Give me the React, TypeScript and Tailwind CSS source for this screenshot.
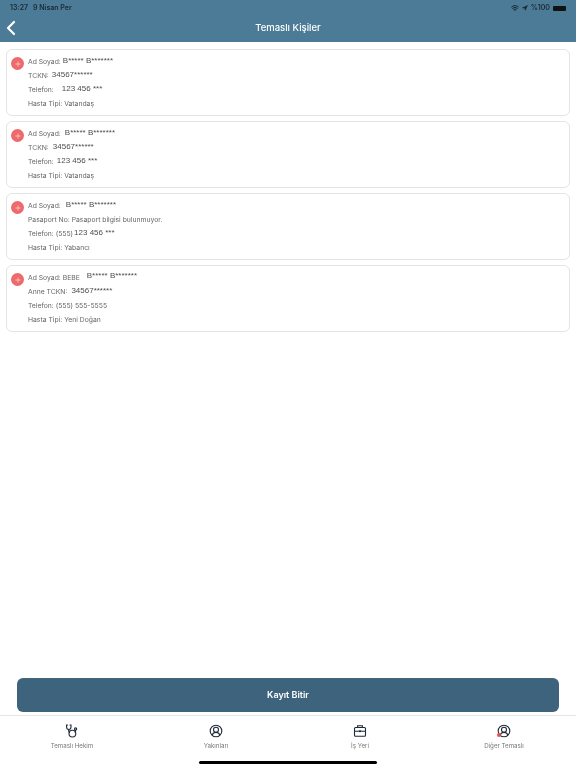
import React from 'react';
import { ChevronLeft, Navigation, Plus, Wifi } from 'lucide-react';

interface Row {
  label: string;
  value?: string;
  valueClass?: string;
}

const contacts: Row[][] = [
  [
    { label: 'Ad Soyad:', value: 'B***** B*******', valueClass: 'ml-[2px] -translate-y-px' },
    { label: 'TCKN:', value: '34567******', valueClass: 'ml-[3px] -translate-y-px' },
    { label: 'Telefon:', value: '123 456 ***', valueClass: 'ml-[8px] -translate-y-px' },
    { label: 'Hasta Tipi: Vatandaş' },
  ],
  [
    { label: 'Ad Soyad:', value: 'B***** B*******', valueClass: 'ml-[4px] -translate-y-px' },
    { label: 'TCKN:', value: '34567******', valueClass: 'ml-[4px] -translate-y-px' },
    { label: 'Telefon:', value: '123 456 ***', valueClass: 'ml-[3px] -translate-y-px' },
    { label: 'Hasta Tipi: Vatandaş' },
  ],
  [
    { label: 'Ad Soyad:', value: 'B***** B*******', valueClass: 'ml-[5px] -translate-y-px' },
    { label: 'Pasaport No: Pasaport bilgisi bulunmuyor.' },
    { label: 'Telefon: (555)', value: '123 456 ***', valueClass: 'ml-px -translate-y-px' },
    { label: 'Hasta Tipi: Yabancı' },
  ],
  [
    { label: 'Ad Soyad: BEBE', value: 'B***** B*******', valueClass: 'ml-[7px] -translate-y-[2px]' },
    { label: 'Anne TCKN:', value: '34567******', valueClass: 'ml-[4px] -translate-y-px' },
    { label: 'Telefon: (555) 555-5555' },
    { label: 'Hasta Tipi: Yeni Doğan' },
  ],
];

const PersonIcon = () => (
  <svg width="14" height="14" viewBox="0 0 14 14" fill="none" stroke="#1f2937" strokeWidth="1.1">
    <circle cx="7" cy="7" r="5.8" />
    <circle cx="7" cy="5.8" r="2.5" />
    <path d="M3.2 11c.6-1.8 2-2.6 3.8-2.6s3.2.8 3.8 2.6" />
  </svg>
);

const StethoscopeIcon = () => (
  <svg width="14" height="14" viewBox="0 0 14 14" fill="none" stroke="#1f2937" strokeWidth="1.1" strokeLinecap="round">
    <path d="M2.6 1H1.6v2c0 1.5 1 2.5 2.2 2.5S6 4.5 6 3V1H5" />
    <path d="M3.8 5.5v1.2" />
    <circle cx="7.4" cy="9.6" r="3.4" />
    <path d="M3.8 6.7c0 1 .3 1.6.7 2M10.6 6.2c0 1-.2 1.5-.6 2" />
    <circle cx="10.6" cy="5" r="1.1" />
  </svg>
);

const BriefcaseIcon = () => (
  <svg width="14" height="14" viewBox="0 0 14 14" fill="none" stroke="#1f2937" strokeWidth="1.1">
    <rect x="1.5" y="3.5" width="11" height="8.8" rx="1" />
    <path d="M4.6 3.4V1.8h4.8v1.6M1.5 7.2h4M8.5 7.2h4" />
    <rect x="5.6" y="6.3" width="2.8" height="1.8" fill="#1f2937" stroke="none" />
  </svg>
);

const tabs = [
  { label: 'Temaslı Hekim', icon: <StethoscopeIcon /> },
  { label: 'Yakınları', icon: <PersonIcon /> },
  { label: 'İş Yeri', icon: <BriefcaseIcon /> },
  { label: 'Diğer Temaslı', icon: <PersonIcon />, dot: true },
];

const ContactCard: React.FC<{ rows: Row[] }> = ({ rows }) => (
  <div className="flex h-[67px] rounded-md border border-[#e4e4e4] bg-white pl-[4px] pt-[5px]">
    <div className="mt-[2px] flex h-[13px] w-[13px] items-center justify-center rounded-full bg-[#ec6a6c] text-white">
      <Plus size={8} strokeWidth={1.5} />
    </div>
    <div className="ml-[4px] flex flex-col">
      {rows.map((row, i) => (
        <div key={i} className="flex h-[14px] items-center whitespace-nowrap text-[6.8px] text-[#666]">
          <span>{row.label}</span>
          {row.value && (
            <span className={`font-['Liberation_Sans',sans-serif] text-[8px] text-[#4d4d4d] ${row.valueClass ?? ''}`}>
              {row.value}
            </span>
          )}
        </div>
      ))}
    </div>
  </div>
);

export default function App() {
  return (
    <div className="flex h-[768px] w-[576px] flex-col overflow-hidden bg-white font-['Inter','Liberation_Sans',sans-serif] blur-[0.3px]">
      <header className="h-[42px] shrink-0 bg-[#4b7b97]">
        <div className="flex h-[14px] items-center justify-between px-[10px] pt-[2px] text-[7px] font-semibold text-[#1b2a33]">
          <div className="flex gap-[5px]">
            <span>13:27</span>
            <span>9 Nisan Per</span>
          </div>
          <div className="flex items-center gap-[3px]">
            <Wifi size={8} strokeWidth={3} />
            <Navigation size={6} fill="currentColor" />
            <span>%100</span>
            <div className="h-[5px] w-[13px] rounded-[1px] bg-[#111]" />
          </div>
        </div>
        <div className="relative flex h-[28px] items-center justify-center">
          <ChevronLeft className="absolute left-[-1px] text-white" size={24} strokeWidth={2.2} />
          <span className="text-[9.5px] font-medium text-white">Temaslı Kişiler</span>
        </div>
      </header>

      <main className="flex flex-1 flex-col gap-[5px] px-[6px] pt-[7px]">
        {contacts.map((rows, i) => (
          <ContactCard key={i} rows={rows} />
        ))}
      </main>

      <div className="shrink-0 px-[17px] pb-[3px]">
        <button className="h-[34px] w-full rounded-md bg-[#3d637d] text-[9px] font-semibold text-white">
          Kayıt Bitir
        </button>
      </div>

      <nav className="relative h-[53px] shrink-0 border-t border-[#e6e6e6]">
        <div className="grid grid-cols-4 pt-[8px]">
          {tabs.map((tab) => (
            <div key={tab.label} className="flex flex-col items-center">
              <div className="relative flex h-[14px] items-center">
                {tab.icon}
                {tab.dot && <div className="absolute bottom-[1px] left-0 h-[4px] w-[4px] rounded-full bg-[#ec4e50]" />}
              </div>
              <span className="mt-[3px] text-[6.2px] leading-[10px] text-[#777]">{tab.label}</span>
            </div>
          ))}
        </div>
        <div className="absolute bottom-[4px] left-[199px] h-[3px] w-[178px] rounded-full bg-black" />
      </nav>
    </div>
  );
}
